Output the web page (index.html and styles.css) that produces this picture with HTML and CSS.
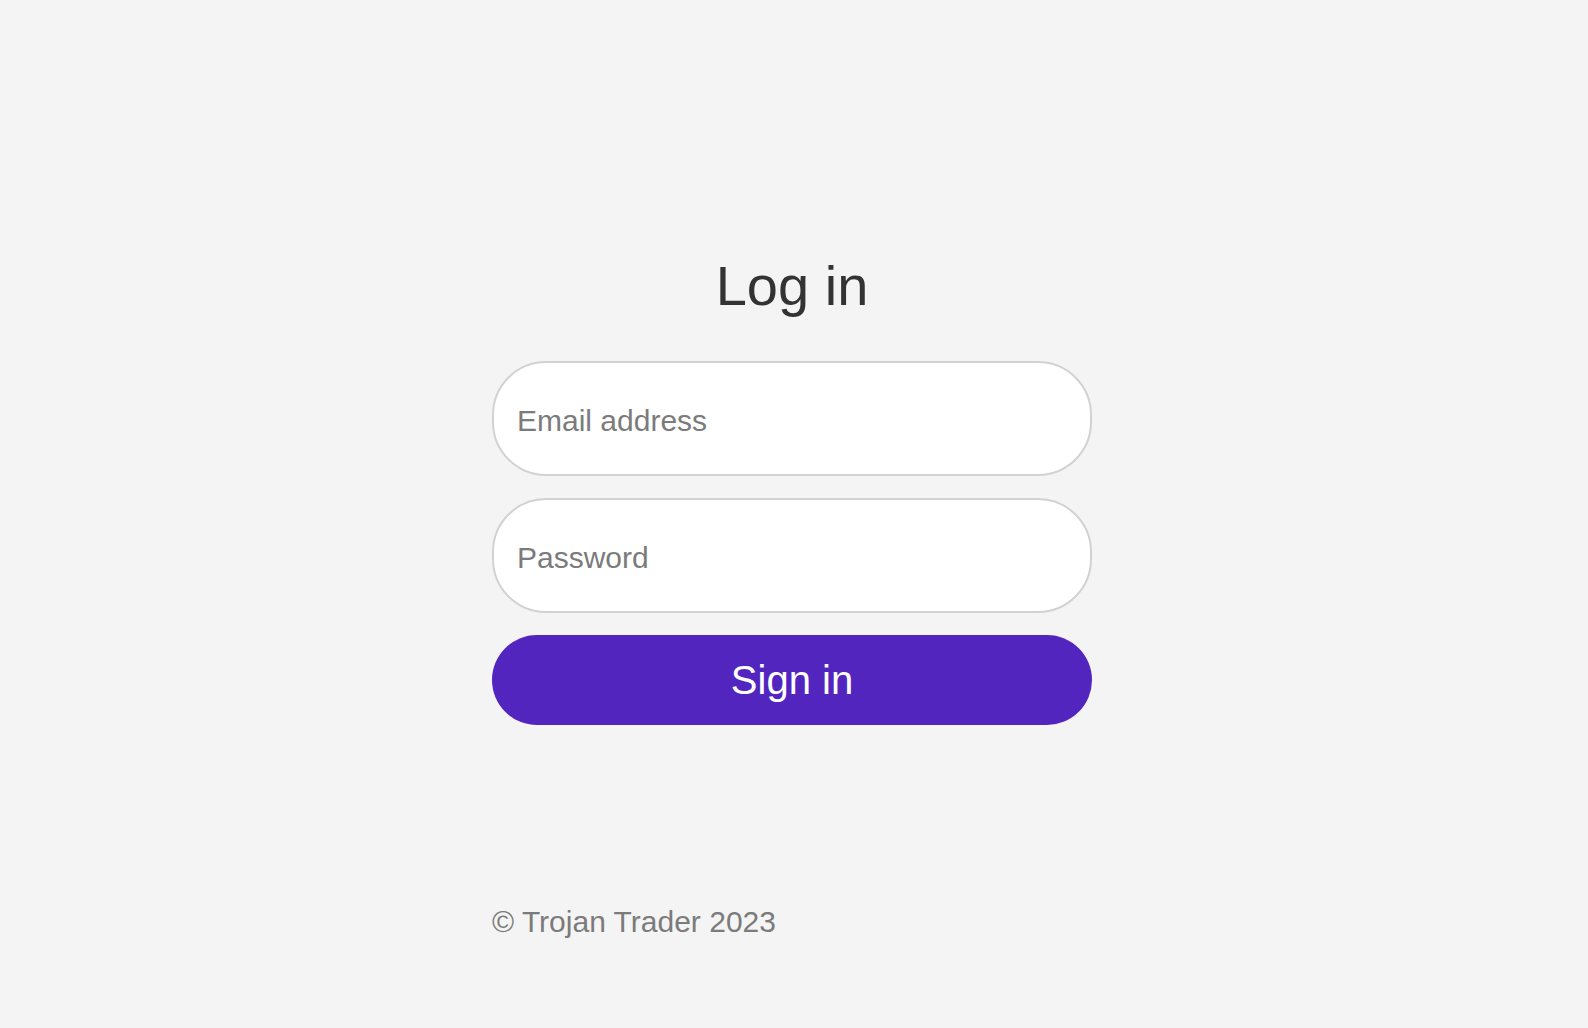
FILE: index.html
```html
<!DOCTYPE html>
<html lang="en">
<head>
<meta charset="utf-8">
<title>Log in - Trojan Trader</title>
<link rel="stylesheet" href="styles.css">
</head>
<body>
<main class="page">
  <form class="login">
    <h1 class="title">Log in</h1>
    <input class="field" type="email" placeholder="Email address">
    <input class="field" type="password" placeholder="Password">
    <button class="submit" type="button">Sign in</button>
  </form>
  <footer class="footer">© Trojan Trader 2023</footer>
</main>
</body>
</html>
```

FILE: styles.css
```css
html, body {
  margin: 0;
  padding: 0;
  background: #f4f4f4;
  font-family: "Liberation Sans", Arial, sans-serif;
}

body {
  padding-right: 4px;
}

.page {
  width: 600px;
  margin: 0 auto;
  padding-top: 254px;
  display: flex;
  flex-direction: column;
}

.login {
  display: flex;
  flex-direction: column;
  gap: 22px;
  margin: 0;
}

.title {
  margin: 0 0 21px;
  font-size: 56px;
  line-height: 64px;
  font-weight: normal;
  color: #333333;
  text-align: center;
}

.field {
  box-sizing: border-box;
  width: 100%;
  height: 115px;
  margin: 0;
  padding: 5px 24px 0 23px;
  border: 2px solid #d2d2d2;
  border-radius: 54px;
  background: #ffffff;
  font-family: "Liberation Sans", Arial, sans-serif;
  font-size: 30px;
  color: #333333;
  outline: none;
}

.field::placeholder {
  color: #7b7b7b;
  opacity: 1;
}

.submit {
  box-sizing: border-box;
  width: 100%;
  height: 90px;
  margin: 0;
  padding: 0;
  border: none;
  border-radius: 45px;
  background: #5225bf;
  color: #ffffff;
  font-family: "Liberation Sans", Arial, sans-serif;
  font-size: 40px;
  cursor: pointer;
}

.footer {
  margin-top: 179px;
  font-size: 30px;
  line-height: 36px;
  color: #7b7b7b;
}
```
